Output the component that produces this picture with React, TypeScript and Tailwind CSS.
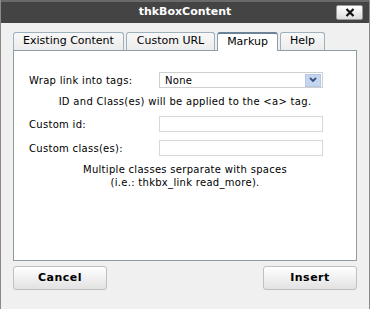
import React from "react";

const tabs = [
  { label: "Existing Content", w: "w-[111px]" },
  { label: "Custom URL", w: "w-[89px]" },
  { label: "Markup", w: "w-[61px]", active: true },
  { label: "Help", w: "w-[45px]" },
];

function Field({ label, children }: { label: string; children: React.ReactNode }) {
  return (
    <div className="flex items-center h-[16px]">
      <div className="w-[130px]">{label}</div>
      {children}
    </div>
  );
}

export default function App() {
  return (
    <div
      className="w-[370px] h-[309px] bg-[#f0f0f0] border-x border-[#8a8a8a] flex flex-col text-[10px] tracking-[0.3px] text-black"
      style={{ fontFamily: '"DejaVu Sans", Verdana, sans-serif' }}
    >
      <div className="h-[2px] bg-[#6a6a6a]" />
      <div className="relative h-[21px] bg-[#444444] flex items-center justify-center">
        <span className="text-white font-bold text-[11px] tracking-normal">thkBoxContent</span>
        <button className="absolute right-[6px] top-[3px] w-[27px] h-[15px] rounded-[2px] border border-[#9a9a9a] bg-gradient-to-b from-white to-[#dcdcdc] flex items-center justify-center">
          <svg width="10" height="9" viewBox="0 0 10 9">
            <path d="M1.5 1 L8.5 8 M8.5 1 L1.5 8" stroke="#111" strokeWidth="2.2" />
          </svg>
        </button>
      </div>

      <div className="px-[12px] pt-[9px]">
        <div className="flex items-end gap-[2px] h-[18px]">
          {tabs.map((t) =>
            t.active ? (
              <div
                key={t.label}
                className={`${t.w} h-[19px] -mb-[1px] z-10 bg-white border border-b-0 border-[#8aa0b2] border-t-2 border-t-[#6c8296] rounded-t-[3px] flex items-center justify-center text-[11px] tracking-normal`}
              >
                {t.label}
              </div>
            ) : (
              <div
                key={t.label}
                className={`${t.w} h-[18px] bg-gradient-to-b from-[#f8f8f8] to-[#ececec] border border-b-0 border-[#9fb0bd] rounded-t-[3px] flex items-center justify-center text-[11px] tracking-normal`}
              >
                {t.label}
              </div>
            )
          )}
        </div>

        <div className="h-[211px] bg-white border border-[#8f9ca3] pl-[15px] pt-[21px]">
          <Field label="Wrap link into tags:">
            <div className="w-[164px] h-[16px] border border-[#cfcfcf] flex items-center justify-between pl-[5px] pr-[1px]">
              <span>None</span>
              <div className="w-[16px] h-[13px] bg-[#c6d5ef] border border-[#b5c6e6] flex items-center justify-center">
                <svg width="8" height="6" viewBox="0 0 8 6">
                  <path d="M1 1 L4 4 L7 1" stroke="#3a4f7e" strokeWidth="1.8" fill="none" />
                </svg>
              </div>
            </div>
          </Field>
          <div className="text-center pr-[15px] mt-[6px] h-[16px] leading-[16px]">
            ID and Class(es) will be applied to the &lt;a&gt; tag.
          </div>
          <div className="mt-[6px]">
            <Field label="Custom id:">
              <div className="w-[164px] h-[16px] border border-[#d8d8d8]" />
            </Field>
          </div>
          <div className="mt-[8px]">
            <Field label="Custom class(es):">
              <div className="w-[164px] h-[16px] border border-[#d8d8d8]" />
            </Field>
          </div>
          <div className="text-center pr-[15px] mt-[7px] leading-[13px]">
            <div>Multiple classes serparate with spaces</div>
            <div>(i.e.: thkbx_link read_more).</div>
          </div>
        </div>

        <div className="flex justify-between mt-[5px]">
          <button className="w-[94px] h-[24px] rounded-[3px] border border-[#c0c0c0] bg-gradient-to-b from-white to-[#e2e2e2] font-bold text-[11px] tracking-[0.5px]">
            Cancel
          </button>
          <button className="w-[94px] h-[24px] rounded-[3px] border border-[#c0c0c0] bg-gradient-to-b from-white to-[#e2e2e2] font-bold text-[11px] tracking-[0.5px]">
            Insert
          </button>
        </div>
      </div>
    </div>
  );
}
